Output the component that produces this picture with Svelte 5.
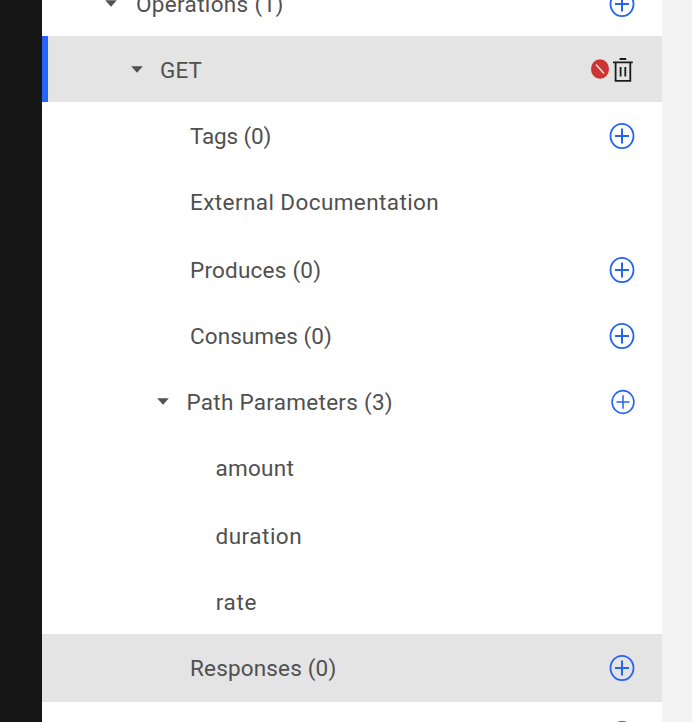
<script>
  const rows = [
    { label: 'Operations (1)', x: 94, h: 66, ls: 0.34, caret: 62, icon: 'add' },
    { label: 'GET', x: 118, h: 66, ls: 0.1, caret: 88, icon: 'remove', shaded: true, selected: true },
    { label: 'Tags (0)', x: 148, h: 66, ls: -0.15, icon: 'add' },
    { label: 'External Documentation', x: 148, h: 68, ls: 0.41 },
    { label: 'Produces (0)', x: 148, h: 66, ls: 0.22, icon: 'add' },
    { label: 'Consumes (0)', x: 148, h: 66, ls: 0.08, icon: 'add' },
    { label: 'Path Parameters (3)', x: 144.5, h: 66, ls: 0.27, caret: 114, icon: 'add', small: true },
    { label: 'amount', x: 173.5, h: 68, ls: 0.25 },
    { label: 'duration', x: 173.5, h: 66, ls: 0.5 },
    { label: 'rate', x: 173.8, h: 66, ls: 0.6 },
    { label: 'Responses (0)', x: 148, h: 68, ls: 0.17, icon: 'add', shaded: true },
    { label: '', x: 148, h: 66, ls: 0, icon: 'add', raised: true },
  ];
</script>

<div class="app">
  <nav class="rail"></nav>
  <main class="tree">
    {#each rows as row}
      <div class="row" class:shaded={row.shaded} class:selected={row.selected} style="height:{row.h}px">
        <div class="lead" style="width:{row.x}px">
          {#if row.caret}
            <svg class="caret" style="margin-left:{row.caret}px" width="14" height="10" viewBox="0 0 14 10"><path d="M1.2 1.3H12.8L7 7.7Z" fill="#525252" /></svg>
          {/if}
        </div>
        <span class="label" style="letter-spacing:{row.ls}px">{row.label}</span>
        {#if row.icon === 'add'}
          <svg class="add" class:raised={row.raised} width="28" height="28" viewBox="0 0 28 28" fill="none" stroke="#2563f5">
            {#if row.small}
              <ellipse cx="15" cy="14" rx="10.9" ry="11.4" stroke-width="1.6" />
              <path d="M8.5 14H21.5M15 7.2V20.8" stroke-width="1.5" />
            {:else}
              <ellipse cx="14" cy="14" rx="11.5" ry="12.2" stroke-width="1.8" />
              <path d="M7 14H21M14 6.4V21.6" stroke-width="2" />
            {/if}
          </svg>
        {:else if row.icon === 'remove'}
          <div class="actions">
            <svg width="20" height="22" viewBox="0 0 20 22"><ellipse cx="10" cy="11" rx="9" ry="9.8" fill="#cc3333" /><path d="M6 6.4L14 15.6" stroke="#f3dede" stroke-width="1.5" /></svg>
            <svg class="trash" width="22" height="26" viewBox="0 0 22 26" fill="none" stroke="#1b1b1b" stroke-width="1.8"><path d="M7.6 2H14.2M1 5.3H20.8M3.6 5.3V23.9H18.3V5.3M8.6 10V19.6M13.3 10V19.6" /></svg>
          </div>
        {/if}
      </div>
    {/each}
  </main>
  <aside class="gutter"></aside>
</div>

<style>
  :global(body) { overflow: hidden; }
  .app { display: flex; width: 692px; height: 722px; overflow: hidden; background: #fff; }
  .rail { width: 42px; flex: none; background: #161616; }
  .tree { width: 620px; flex: none; margin-top: -30px; background: #fff; }
  .gutter { width: 30px; flex: none; background: #f3f3f3; }
  .row { display: flex; align-items: flex-start; box-sizing: border-box; }
  .shaded { background: #e4e4e4; }
  .selected { box-shadow: inset 6px 0 #2563fa; }
  .lead { flex: none; }
  .caret { display: block; margin-top: 29px; }
  .label { flex: 1; font: 400 22.5px/68px Roboto, sans-serif; color: #505050; white-space: nowrap; }
  .add { flex: none; margin: 20px 26px 0 0; }
  .raised { margin-top: 18px; }
  .actions { display: flex; flex: none; margin: 22px 28px 0 0; gap: 2px; }
  .trash { margin-top: -1px; }
</style>
